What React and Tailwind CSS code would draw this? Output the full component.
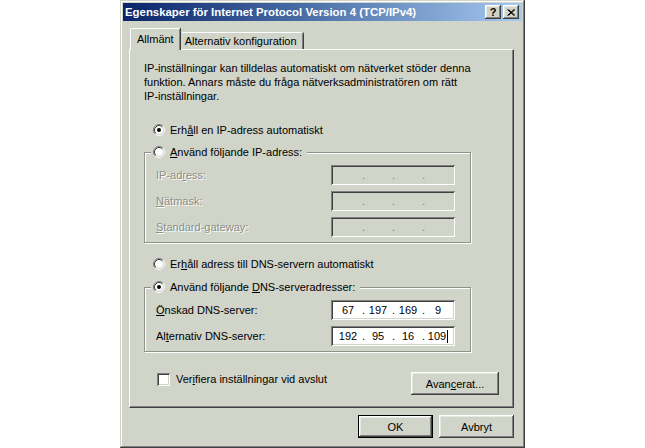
import { Fragment } from "react";

const ui = "font-['Liberation_Sans',Arial,sans-serif] text-[11px] leading-[14px] text-black";
const face = "bg-[#d0d4c9]";
const raised =
  "shadow-[inset_-1px_-1px_0_#404040,inset_1px_1px_0_#ffffff,inset_-2px_-2px_0_#808080,inset_2px_2px_0_#e6e8e2]";
const sunken =
  "shadow-[inset_1px_1px_0_#808080,inset_-1px_-1px_0_#ffffff,inset_2px_2px_0_#404040,inset_-2px_-2px_0_#d0d4c9]";
const frame =
  "shadow-[inset_-1px_-1px_0_#404040,inset_1px_1px_0_#d0d4c9,inset_-2px_-2px_0_#808080,inset_2px_2px_0_#ffffff]";
const dim = "text-[#8b8f88] [text-shadow:1px_1px_0_#ffffff]";

function Radio({ checked }) {
  return (
    <svg width="12" height="12" viewBox="0 0 12 12" className="shrink-0">
      <circle cx="6" cy="6" r="4" fill="#ffffff" />
      <path d="M2.11 9.89A5.5 5.5 0 0 1 9.89 2.11" fill="none" stroke="#808080" />
      <path d="M9.89 2.11A5.5 5.5 0 0 1 2.11 9.89" fill="none" stroke="#ffffff" />
      <path d="M2.82 9.18A4.5 4.5 0 0 1 9.18 2.82" fill="none" stroke="#404040" />
      <path d="M9.18 2.82A4.5 4.5 0 0 1 2.82 9.18" fill="none" stroke="#d0d4c9" />
      {checked && <circle cx="6" cy="6" r="2" fill="#000000" />}
    </svg>
  );
}

function RadioRow({ checked, children }) {
  return (
    <div className="flex h-[14px] items-center gap-[5px]">
      <Radio checked={checked} />
      <span>{children}</span>
    </div>
  );
}

function IpField({ parts, disabled, caret }) {
  return (
    <div
      className={`flex h-[20px] w-[124px] items-center pl-[3px] ${sunken} ${
        disabled ? face : "bg-white"
      }`}
    >
      {parts.map((p, i) => (
        <Fragment key={i}>
          {i > 0 && (
            <span className={`w-[2px] text-center ${disabled ? "text-[#808080]" : ""}`}>.</span>
          )}
          <span className="w-[28px] text-center">
            {p}
            {caret && i === 3 && (
              <span className="ml-[1px] inline-block h-[13px] w-px bg-black align-[-3px]" />
            )}
          </span>
        </Fragment>
      ))}
    </div>
  );
}

function Group({ legend, checked, children }) {
  return (
    <div className="ml-[14px] flex w-[327px] flex-col">
      <div className={`relative z-10 ml-[7px] w-fit pl-[2px] pr-[5px] ${face}`}>
        <RadioRow checked={checked}>{legend}</RadioRow>
      </div>
      <div className="-mt-[7px] border border-[#8e928b] pt-[12px] pb-[5px] pl-[11px] shadow-[inset_1px_1px_0_#ffffff,1px_1px_0_#ffffff]">
        <div className="grid grid-cols-[175px_124px] gap-y-[6px]">{children}</div>
      </div>
    </div>
  );
}

function Label({ children, disabled }) {
  return <div className={`flex h-[20px] items-center ${disabled ? dim : ""}`}>{children}</div>;
}

function Button({ children, def, className = "" }) {
  return (
    <div
      className={`flex h-[23px] w-[75px] items-center justify-center ${face} ${
        def ? "border border-black" : ""
      } ${raised} ${className}`}
    >
      {children}
    </div>
  );
}

export default function App() {
  return (
    <div className="min-h-screen bg-white">
      <div className={`mx-auto flex h-[448px] w-[405px] flex-col p-[3px] ${face} ${frame} ${ui}`}>
        {/* title bar */}
        <div className="flex h-[18px] shrink-0 items-center bg-linear-to-r from-[#0a246a] to-[#a6caf0] pl-[2px] pr-[3px]">
          <span className="flex-1 text-[11.4px] font-bold text-white">
            Egenskaper för Internet Protocol Version 4 (TCP/IPv4)
          </span>
          <div className="flex gap-[2px]">
            <div className={`flex h-[14px] w-[16px] items-center justify-center ${face} ${raised} text-[11px] font-bold leading-none`}>
              ?
            </div>
            <div className={`flex h-[14px] w-[16px] items-center justify-center ${face} ${raised}`}>
              <svg width="8" height="7" viewBox="0 0 8 7">
                <path d="M0.5 0.5L7 6.5M1.5 0.5L8 6.5M7 0.5L0.5 6.5M8 0.5L1.5 6.5" stroke="#000" strokeWidth="1" fill="none" />
              </svg>
            </div>
          </div>
        </div>

        {/* tabs + panel */}
        <div className="ml-[6px] mt-[7px] flex w-[385px] flex-col">
          <div className="flex h-[21px] items-end">
            <div className={`relative z-10 -mb-px ml-px flex h-[22px] items-start rounded-tl-[2px] border-t border-l border-white px-[6px] pt-[3px] ${face} shadow-[inset_-1px_0_0_#808080,1px_0_0_#404040]`}>
              Allmänt
            </div>
            <div className="ml-[2px] flex h-[17px] items-start rounded-tr-[2px] border-t border-white pl-[3px] pr-[6px] pt-px shadow-[inset_-1px_0_0_#808080,1px_0_0_#404040]">
              Alternativ konfiguration
            </div>
          </div>
          <div className="flex h-[359px] flex-col border border-t-white border-l-white border-r-[#404040] border-b-[#404040] shadow-[inset_-1px_-1px_0_#808080]">
            <p className="pl-[14px] pt-[11px]">
              IP-inställningar kan tilldelas automatiskt om nätverket stöder denna
              <br />
              funktion. Annars måste du fråga nätverksadministratören om rätt
              <br />
              IP-inställningar.
            </p>

            <div className="mt-[20px] pl-[23px]">
              <RadioRow checked>
                Erh<u>å</u>ll en IP-adress automatiskt
              </RadioRow>
            </div>

            <div className="mt-[8px]">
              <Group
                legend={
                  <>
                    <u>A</u>nvänd följande IP-adress:
                  </>
                }
              >
                <Label disabled>
                  IP-ad<u>r</u>ess:
                </Label>
                <IpField parts={["", "", "", ""]} disabled />
                <Label disabled>
                  <u>N</u>ätmask:
                </Label>
                <IpField parts={["", "", "", ""]} disabled />
                <Label disabled>
                  <u>S</u>tandard-gateway:
                </Label>
                <IpField parts={["", "", "", ""]} disabled />
              </Group>
            </div>

            <div className="mt-[14px] pl-[23px]">
              <RadioRow>
                Er<u>h</u>åll adress till DNS-servern automatiskt
              </RadioRow>
            </div>

            <div className="mt-[9px]">
              <Group
                checked
                legend={
                  <>
                    Använd följande <u>D</u>NS-serveradresser:
                  </>
                }
              >
                <Label>
                  <u>Ö</u>nskad DNS-server:
                </Label>
                <IpField parts={["67", "197", "169", "9"]} />
                <Label>
                  Al<u>t</u>ernativ DNS-server:
                </Label>
                <IpField parts={["192", "95", "16", "109"]} caret />
              </Group>
            </div>

            <div className="mt-[20px] flex items-start justify-between pl-[27px] pr-[14px]">
              <div className="flex h-[14px] items-center gap-[6px]">
                <span className={`h-[13px] w-[13px] bg-white ${sunken}`} />
                <span>
                  Ver<u>i</u>fiera inställningar vid avslut
                </span>
              </div>
              <Button className="w-[88px]">
                Avan<u>c</u>erat...
              </Button>
            </div>
          </div>
        </div>

        {/* dialog buttons */}
        <div className="mt-[7px] flex justify-end gap-[6px] pr-[8px]">
          <Button def>OK</Button>
          <Button>Avbryt</Button>
        </div>
      </div>
    </div>
  );
}
